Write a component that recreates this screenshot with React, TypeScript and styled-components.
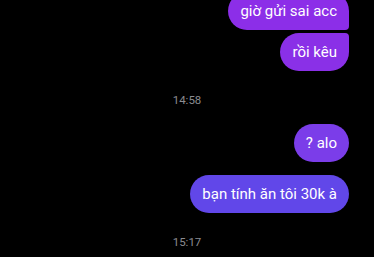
import React from 'react';
import styled, { createGlobalStyle } from 'styled-components';

const GlobalStyle = createGlobalStyle`
  html, body {
    margin: 0;
    padding: 0;
    background: #000;
    overflow: hidden;
  }
  body {
    font-family: Roboto, "Noto Sans", "Liberation Sans", sans-serif;
  }
`;

const Thread = styled.div`
  width: 374px;
  height: 257px;
  overflow: hidden;
  background: #000;
`;

const List = styled.div`
  display: flex;
  flex-direction: column;
  align-items: flex-end;
  padding: 0 25px;
  margin-top: -8px;
`;

const Group = styled.div<{ $gap?: number }>`
  display: flex;
  flex-direction: column;
  align-items: flex-end;
  gap: 3px;
  margin-top: ${({ $gap }) => $gap ?? 0}px;
`;

type Pos = 'single' | 'first' | 'middle' | 'last';

const radius = (pos: Pos) => {
  switch (pos) {
    case 'first':
      return '19px 19px 4px 19px';
    case 'middle':
      return '19px 4px 4px 19px';
    case 'last':
      return '19px 4px 19px 19px';
    default:
      return '19px';
  }
};

const Bubble = styled.div<{ $bg: string; $pos: Pos }>`
  height: 38px;
  box-sizing: border-box;
  padding: 0 12px;
  display: flex;
  align-items: center;
  background: ${({ $bg }) => $bg};
  border-radius: ${({ $pos }) => radius($pos)};
  color: #fff;
  font-size: 15px;
  white-space: nowrap;
`;

const Stamp = styled.div`
  align-self: stretch;
  text-align: center;
  padding: 22px 0 17px;
  line-height: 14px;
  font-size: 11.5px;
  color: #8b8b90;
`;

export default function App() {
  return (
    <>
      <GlobalStyle />
      <Thread>
        <List>
          <Group>
            <Bubble $bg="#8c2ee8" $pos="first">giờ gửi sai acc</Bubble>
            <Bubble $bg="#8a30e7" $pos="last">rồi kêu</Bubble>
          </Group>
          <Stamp>14:58</Stamp>
          <Group>
            <Bubble $bg="#7b3de9" $pos="single">? alo</Bubble>
          </Group>
          <Group $gap={13}>
            <Bubble $bg="#6147e9" $pos="single">bạn tính ăn tôi 30k à</Bubble>
          </Group>
          <Stamp>15:17</Stamp>
        </List>
      </Thread>
    </>
  );
}
